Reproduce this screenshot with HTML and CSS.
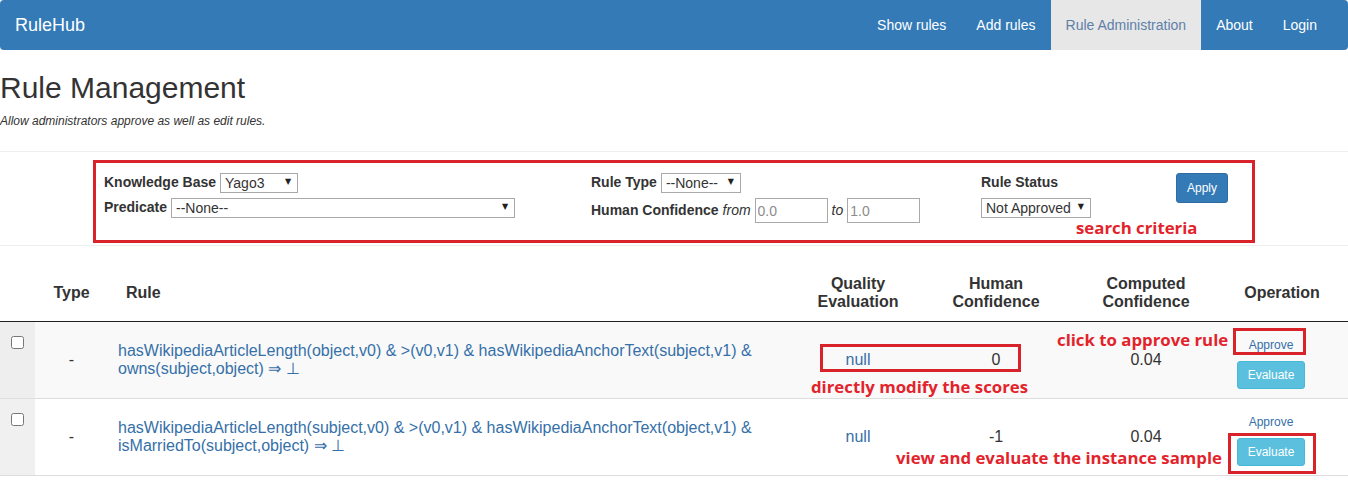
FILE: index.html
```html
<!DOCTYPE html>
<html lang="en">
<head>
<meta charset="utf-8">
<title>RuleHub - Rule Management</title>
<link rel="stylesheet" href="styles.css">
</head>
<body>
<nav class="navbar">
  <a class="brand" href="#">RuleHub</a>
  <ul class="nav">
    <li><a href="#">Show rules</a></li>
    <li><a href="#">Add rules</a></li>
    <li class="active"><a href="#">Rule Administration</a></li>
    <li><a href="#">About</a></li>
    <li><a href="#">Login</a></li>
  </ul>
</nav>

<header class="page-header">
  <h2>Rule Management</h2>
  <p class="subtitle">Allow administrators approve as well as edit rules.</p>
</header>

<section class="filters">
  <form class="filter-box">
    <div class="fgroup">
      <div class="frow"><label for="kb">Knowledge Base</label><span class="select kb"><select id="kb"><option>Yago3</option></select></span></div>
      <div class="frow"><label for="pred">Predicate</label><span class="select pred"><select id="pred"><option>--None--</option></select></span></div>
    </div>
    <div class="fgroup">
      <div class="frow"><label for="rt">Rule Type</label><span class="select rtype"><select id="rt"><option>--None--</option></select></span></div>
      <div class="frow"><label for="hcf">Human Confidence</label><em>from</em><input id="hcf" class="conf" type="text" placeholder="0.0"><em>to</em><input class="conf" type="text" placeholder="1.0"></div>
    </div>
    <div class="fgroup">
      <div class="frow"><label for="rs">Rule Status</label></div>
      <div class="frow"><span class="select rstatus"><select id="rs"><option>Not Approved</option></select></span></div>
    </div>
    <div class="fgroup">
      <button class="btn btn-primary" type="button">Apply</button>
    </div>
    <span class="anno-text note-search">search criteria</span>
  </form>
</section>

<div class="table-wrap">
  <table class="rules">
    <colgroup>
      <col class="c-check"><col class="c-type"><col class="c-rule"><col class="c-quality"><col class="c-human"><col class="c-computed"><col class="c-op">
    </colgroup>
    <thead>
      <tr>
        <th></th>
        <th>Type</th>
        <th class="th-rule">Rule</th>
        <th>Quality<br>Evaluation</th>
        <th>Human<br>Confidence</th>
        <th>Computed<br>Confidence</th>
        <th>Operation</th>
      </tr>
    </thead>
    <tbody>
      <tr class="striped">
        <td class="check"><input type="checkbox"></td>
        <td class="type">-</td>
        <td class="rule"><a href="#">hasWikipediaArticleLength(object,v0) &amp; &gt;(v0,v1) &amp; hasWikipediaAnchorText(subject,v1) &amp; owns(subject,object) ⇒ ⊥</a></td>
        <td class="val"><a href="#">null</a></td>
        <td class="val">0</td>
        <td class="val">0.04</td>
        <td class="op"><a class="approve" href="#">Approve</a><button class="btn btn-info" type="button">Evaluate</button></td>
      </tr>
      <tr>
        <td class="check"><input type="checkbox"></td>
        <td class="type">-</td>
        <td class="rule"><a href="#">hasWikipediaArticleLength(subject,v0) &amp; &gt;(v0,v1) &amp; hasWikipediaAnchorText(object,v1) &amp; isMarriedTo(subject,object) ⇒ ⊥</a></td>
        <td class="val"><a href="#">null</a></td>
        <td class="val">-1</td>
        <td class="val">0.04</td>
        <td class="op"><a class="approve" href="#">Approve</a><button class="btn btn-info" type="button">Evaluate</button></td>
      </tr>
    </tbody>
  </table>

  <span class="anno-box box-scores"></span>
  <span class="anno-text note-scores">directly modify the scores</span>
  <span class="anno-text note-approve">click to approve rule</span>
  <span class="anno-box box-approve"></span>
  <span class="anno-text note-evaluate">view and evaluate the instance sample</span>
  <span class="anno-box box-evaluate"></span>
</div>
</body>
</html>
```

FILE: styles.css
```css
* { box-sizing: border-box; }

html, body { margin: 0; padding: 0; }

body {
  font-family: "Liberation Sans", Arial, Helvetica, sans-serif;
  font-size: 14px;
  line-height: 1.42857;
  color: #333;
  background: #fff;
}

a { color: #3570a8; text-decoration: none; }

/* ---------- navbar ---------- */
.navbar {
  display: flex;
  justify-content: space-between;
  height: 50px;
  padding: 0 16px 0 15px;
  background: #337ab7;
  border-radius: 4px;
}
.brand {
  font-size: 18px;
  line-height: 20px;
  padding: 15px 0;
  color: #fff;
}
.nav {
  list-style: none;
  margin: 0;
  padding: 0;
  display: flex;
}
.nav a {
  display: block;
  padding: 15px;
  line-height: 20px;
  color: #fff;
}
.nav .active a {
  background: #e7e7e7;
  color: #5e80a8;
}

/* ---------- header ---------- */
.page-header h2 {
  margin: 21px 0 0;
  font-size: 30px;
  font-weight: normal;
  line-height: 1.1;
}
.subtitle {
  margin: 9px 0 0;
  font-size: 12px;
  line-height: 17px;
  font-style: italic;
}

/* ---------- filters ---------- */
.filters {
  margin-top: 21px;
  border-top: 1px solid #eee;
  border-bottom: 1px solid #eee;
  padding: 8px 0 2px;
}
.filter-box {
  position: relative;
  margin: 0 0 0 93px;
  width: 1162px;
  height: 83px;
  border: 3px solid #d9232b;
  padding: 10px 0 0 8px;
  display: grid;
  grid-template-columns: 487px 390px 195px auto;
  align-items: start;
}
.fgroup {
  display: flex;
  flex-direction: column;
  align-items: flex-start;
  gap: 5px;
}
.frow {
  display: flex;
  align-items: center;
  gap: 4px;
  min-height: 20px;
}
.frow label { font-weight: bold; }
.frow em { font-style: italic; }

.select {
  position: relative;
  display: inline-block;
  height: 20px;
}
.select select {
  -webkit-appearance: none;
  appearance: none;
  display: block;
  width: 100%;
  height: 20px;
  margin: 0;
  padding: 0 4px;
  border: 1px solid #a9a9a9;
  border-radius: 0;
  background: #fff;
  font: 14px/18px "Liberation Sans", Arial, sans-serif;
  color: #333;
}
.select::after {
  content: "▼";
  position: absolute;
  right: 7px;
  top: 4px;
  font: 8px/10px "DejaVu Sans", sans-serif;
  color: #222;
  pointer-events: none;
}
.select.kb { width: 78px; }
.select.pred { width: 344px; }
.select.rtype { width: 80px; }
.select.rstatus { width: 110px; }

.conf {
  width: 73px;
  height: 25px;
  margin: 0;
  padding: 0 2px;
  border: 1px solid #a9a9a9;
  font: 14px "Liberation Sans", Arial, sans-serif;
  color: #333;
}
.conf::placeholder { color: #8c8c8c; }

.btn {
  display: inline-block;
  margin: 0;
  font-family: "Liberation Sans", Arial, sans-serif;
  font-size: 12px;
  line-height: 18px;
  border-radius: 3px;
  color: #fff;
  cursor: pointer;
}
.btn-primary {
  padding: 5px 10px;
  background: #337ab7;
  border: 1px solid #2e6da4;
}
.btn-info {
  padding: 4px 10px;
  background: #5bc0de;
  border: 1px solid #46b8da;
}

/* ---------- annotations ---------- */
.anno-text {
  position: absolute;
  white-space: nowrap;
  font-family: "Open Sans", "Noto Sans", sans-serif;
  font-weight: bold;
  font-size: 16.8px;
  line-height: 20px;
  color: #e3232b;
}
.anno-box {
  position: absolute;
  border: 3px solid #d9232b;
}
.note-search { left: 980px; top: 55px; }

/* ---------- table ---------- */
.table-wrap {
  position: relative;
  padding-top: 19px;
}

.rules {
  width: 100%;
  margin: 0;
  border-collapse: separate;
  border-spacing: 0;
  table-layout: fixed;
  font-size: 16px;
  line-height: 18px;
}
.c-check { width: 35px; }
.c-type { width: 73px; }
.c-rule { width: 692px; }
.c-quality { width: 116px; }
.c-human { width: 160px; }
.c-computed { width: 140px; }
.c-op { width: 132px; }

.rules th {
  padding: 10px 4px;
  font-weight: bold;
  text-align: center;
  vertical-align: middle;
  border-bottom: 1px solid #222;
}
.rules th.th-rule {
  text-align: left;
  padding-left: 18px;
}

.rules td {
  height: 77px;
  padding: 8px 10px;
  vertical-align: middle;
  border-bottom: 1px solid #ddd;
}
.rules tr.striped td { background: #f9f9f9; }
.rules td.check {
  background: #f0f0f0;
  vertical-align: top;
  padding: 13px 0 0 11px;
}
.rules tr.striped td.check { background: #eeeeee; }
.rules td.check input { margin: 0; width: 13px; height: 13px; }
.rules td.type { text-align: center; }
.rules td.val { text-align: center; padding: 8px 4px; }
.rules td.op {
  text-align: center;
  padding: 11px 22px 7px 0;
}
.approve {
  display: block;
  font-size: 12px;
  line-height: 18px;
  margin-bottom: 7px;
}

.box-scores { left: 820px; top: 98px; width: 201px; height: 28px; }
.note-scores { left: 811px; top: 131px; }
.note-approve { left: 1057px; top: 84px; }
.box-approve { left: 1233px; top: 82px; width: 73px; height: 27px; }
.note-evaluate { left: 896px; top: 202px; }
.box-evaluate { left: 1228px; top: 187px; width: 88px; height: 41px; }
```
